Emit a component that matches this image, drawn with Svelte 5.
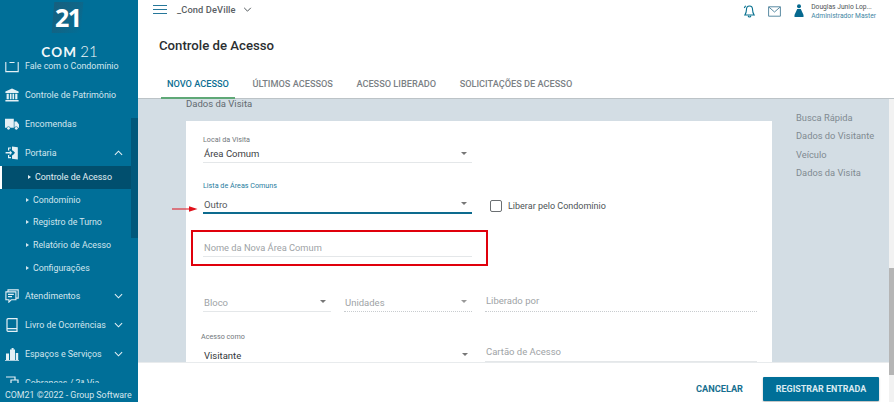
<script>
  // Controle de Acesso: novo acesso, área comum "Outro"
  const sideTop = [
    { label: 'Fale com o Condomínio', icon: 'mail' },
    { label: 'Controle de Patrimônio', icon: 'bank' },
    { label: 'Encomendas', icon: 'truck' },
  ];
  const portaria = ['Controle de Acesso', 'Condomínio', 'Registro de Turno', 'Relatório de Acesso', 'Configurações'];
  const sideBottom = [
    { label: 'Atendimentos', icon: 'chat' },
    { label: 'Livro de Ocorrências', icon: 'book' },
    { label: 'Espaços e Serviços', icon: 'city' },
    { label: 'Cobranças / 2ª Via', icon: 'bill' },
  ];
  const tabs = ['NOVO ACESSO', 'ÚLTIMOS ACESSOS', 'ACESSO LIBERADO', 'SOLICITAÇÕES DE ACESSO'];
  const anchors = ['Busca Rápida', 'Dados do Visitante', 'Veículo', 'Dados da Visita'];
</script>

{#snippet sideIcon(name)}
  <svg class="sicon" viewBox="0 0 14 14" aria-hidden="true">
    {#if name === 'mail'}
      <path d="M.8 1h12.4v11.6H.8zM5 1v2.5h4V1" fill="none" stroke="currentColor" stroke-width="1.1" />
    {:else if name === 'bank'}
      <path d="M7 .4 13.6 3.6v1.4H.4V3.6zM1.6 5.8h2.2v5.4H1.6zM4.9 5.8h1.6v5.4H4.9zM7.5 5.8h1.6v5.4H7.5zM10.2 5.8h2.2v5.4h-2.2zM.4 12h13.2v1.6H.4z" fill="currentColor" />
    {:else if name === 'truck'}
      <path d="M0 1.8h8.8v9H5.4a2 2 0 0 0-3.8 0H0zM9.4 4.4h2.4L14 7.4v3.4h-.9a2 2 0 0 0-3.7 0z" fill="currentColor" />
      <circle cx="3.5" cy="11.3" r="1.4" fill="currentColor" /><circle cx="11.3" cy="11.3" r="1.4" fill="currentColor" />
    {:else if name === 'door'}
      <path d="M7 .4 12.8 1.2V13.6L7 12.7V9.2h.8l2.2-2.4-2.2-2.4H7zM3 1.4h3v1.2H4.2v2H3zM3 9h1.2v2H6v1.2H3zM.6 6.1h4.2V4.4l2.3 2.4-2.3 2.4V7.5H.6z" fill="currentColor" />
    {:else if name === 'chat'}
      <path d="M3 2.8V.9h10.2v8.2h-2.1M.9 2.9h10v7.9H6.2l-2.3 2.3v-2.3h-3zM3 5.4h5.8M3 7.6h4" fill="none" stroke="currentColor" stroke-width="1.1" />
    {:else if name === 'book'}
      <path d="M3 .7h9v12.6H3a1 1 0 0 1-1-1V1.7a1 1 0 0 1 1-1zM2 10.6h10" fill="none" stroke="currentColor" stroke-width="1.2" />
    {:else if name === 'city'}
      <path d="M1 13V6.5h3V13zM5 13V2.5h1.6V1h2v1.5H10V13zM10.8 13V6h2.4v7zM0 13h14v.8H0z" fill="currentColor" />
    {:else}
      <path d="M1 1h9v3M6 4h7v9H6z" fill="none" stroke="currentColor" stroke-width="1.2" />
    {/if}
  </svg>
{/snippet}

{#snippet chevron(up)}
  <svg class="chev" viewBox="0 0 10 6" aria-hidden="true">
    <path d={up ? 'M1 5l4-4 4 4' : 'M1 1l4 4 4-4'} fill="none" stroke="currentColor" stroke-width="1.2" />
  </svg>
{/snippet}

<div class="page">
  <aside class="side">
    <div class="brand">
      <div class="mark"><span>21</span></div>
      <div class="wordmark">COM<span>21</span></div>
    </div>
    <nav class="nav">
      <div class="navscroll">
        {#each sideTop as it}
          <div class="item">{@render sideIcon(it.icon)}<span>{it.label}</span></div>
        {/each}
        <div class="item open">{@render sideIcon('door')}<span>Portaria</span>{@render chevron(true)}</div>
        {#each portaria as sub, i}
          <div class="sub" class:active={i === 0}><i></i>{sub}</div>
        {/each}
        {#each sideBottom as it, i}
          <div class="item" class:after={i === 0}>{@render sideIcon(it.icon)}<span>{it.label}</span>{#if i < 3}{@render chevron(false)}{/if}</div>
        {/each}
      </div>
      <div class="sidebar-thumb"></div>
    </nav>
    <div class="copy">COM21 ©2022 - Group Software</div>
  </aside>

  <main class="main">
    <header class="top">
      <div class="burger"><b></b><b></b><b></b></div>
      <span class="cond">_Cond DeVille</span>
      <svg class="cond-chev" viewBox="0 0 10 6" aria-hidden="true"><path d="M1 1l4 4 4-4" fill="none" stroke="currentColor" stroke-width="1.1" /></svg>
      <div class="top-right">
        <svg class="bell" viewBox="0 0 14 15" aria-hidden="true">
          <path d="M7 1.6c-2.3 0-3.3 1.8-3.3 4 0 2.6-.7 4-1.7 5.6h10c-1-1.6-1.7-3-1.7-5.6 0-2.2-1-4-3.3-4zM5.6 12.2c.2 1.6 2.6 1.6 2.8 0M1.4 3.8 2.8 1.4" fill="none" stroke="#06708f" stroke-width="1.2" />
        </svg>
        <svg class="env" viewBox="0 0 13 11" aria-hidden="true">
          <path d="M.6.8h11.8v9.4H.6zM.8 1l5.7 5 5.7-5" fill="none" stroke="#5b8ba3" stroke-width="1" />
        </svg>
        <svg class="user" viewBox="0 0 10 14" aria-hidden="true">
          <circle cx="5" cy="2.3" r="2" fill="#06698f" /><path d="M3.2 5h3.6l2.7 6v2H.5v-2z" fill="#06698f" />
        </svg>
        <div class="who">
          <div class="who-name">Douglas Junio Lop...</div>
          <div class="who-role">Administrador Master</div>
        </div>
      </div>
    </header>

    <h1 class="title">Controle de Acesso</h1>

    <div class="tabs">
      {#each tabs as t, i}
        <div class="tab" class:on={i === 0}>{t}</div>
      {/each}
    </div>

    <div class="content">
      <div class="section-name">Dados da Visita</div>
      <div class="card">
        <div class="row first">
          <div class="field w269">
            <div class="cap">Local da Visita</div>
            <div class="val">Área Comum<em></em></div>
          </div>
        </div>

        <div class="row second">
          <div class="field w269 focus">
            <div class="cap blue">Lista de Áreas Comuns</div>
            <div class="val">Outro<em></em></div>
          </div>
          <label class="check"><span class="box"></span>Liberar pelo Condomínio</label>
        </div>

        <div class="highlight">
          <div class="field w269">
            <div class="val ph">Nome da Nova Área Comum</div>
          </div>
        </div>

        <div class="row fourth">
          <div class="field w128">
            <div class="val ph">Bloco<em></em></div>
          </div>
          <div class="field w128 off">
            <div class="val ph">Unidades<em></em></div>
          </div>
          <div class="field w272 off released">
            <div class="val ph">Liberado por</div>
          </div>
        </div>

        <div class="row fifth">
          <div class="field w269 visit">
            <div class="cap">Acesso como</div>
            <div class="val dark">Visitante<em></em></div>
          </div>
          <div class="field w272 card-no">
            <div class="val ph">Cartão de Acesso</div>
          </div>
        </div>
      </div>
      <div class="anchors">
        {#each anchors as a}
          <div>{a}</div>
        {/each}
      </div>
      <svg class="pointer" viewBox="0 0 26 6" aria-hidden="true">
        <path d="M0 2.4h17V.2L25.5 3 17 5.8V3.6H0z" fill="#e0101a" />
      </svg>
    </div>

    <footer class="foot">
      <button class="cancel">CANCELAR</button>
      <button class="save">REGISTRAR ENTRADA</button>
    </footer>

    <div class="track"><div class="thumb"></div></div>
  </main>
</div>

<style>
  :global(body) { margin: 0; background: #fff; }
  .page { display: flex; width: 894px; height: 402px; overflow: hidden; font-family: Roboto, "Liberation Sans", sans-serif; }

  /* sidebar */
  .side { width: 138px; flex: none; background: #006f98; color: #d3e6ee; display: flex; flex-direction: column; }
  .brand { height: 62px; flex: none; position: relative; z-index: 1; background: #006f98; display: flex; flex-direction: column; align-items: center; }
  .mark { width: 29px; height: 31px; margin: 2px 0 0 -3px; background: linear-gradient(120deg, #175f7e, #0f6688 55%, #006f98); transform: skewX(-5deg); display: flex; align-items: center; justify-content: center; }
  .mark span { transform: skewX(5deg); font: 700 25px/1 "Open Sans", Roboto, sans-serif; letter-spacing: -1.5px; color: #fff; }
  .wordmark { margin-top: 10px; margin-left: 1px; font: 700 13.5px/16px Lato, Roboto, sans-serif; letter-spacing: 1.2px; color: #f2f8fa; }
  .wordmark span { font-weight: 300; font-size: 15px; margin-left: 3px; letter-spacing: 0; }
  .nav { flex: 1; overflow: hidden; position: relative; min-height: 0; }
  .navscroll { margin-top: -10.5px; }
  .item { height: 29px; display: flex; align-items: center; padding: 0 15px 0 5px; font-size: 8.9px; box-sizing: border-box; }
  .item span { flex: 1; margin-left: 6px; white-space: nowrap; }
  .item.open { height: 27.5px; padding-top: 1px; }
  .item.after { margin-top: 2.5px; }
  .sicon { width: 14px; height: 14px; flex: none; color: #e4f0f5; }
  .chev { width: 9px; height: 6px; flex: none; color: #e4f0f5; }
  .sub { height: 22.6px; display: flex; align-items: center; padding-left: 26px; font-size: 8.8px; white-space: nowrap; }
  .sub i { width: 0; height: 0; border-left: 3px solid currentColor; border-top: 2.5px solid transparent; border-bottom: 2.5px solid transparent; margin-right: 4px; }
  .sub.active { background: #014f6e; border-left: 2px solid #fff; padding-left: 26px; font-size: 8.9px; color: #e3eff4; margin-right: 7px; }
  .sidebar-thumb { position: absolute; right: 0; top: 56px; width: 7px; height: 120px; background: #01587b; }
  .copy { height: 19px; flex: none; box-sizing: border-box; font-size: 8.85px; line-height: 17px; padding: 4px 0 0 5px; white-space: nowrap; color: #d5e6ed; }

  /* main */
  .main { flex: 1; min-width: 0; display: flex; flex-direction: column; position: relative; }
  .top { height: 19px; flex: none; display: flex; align-items: center; padding-left: 15px; }
  .burger { width: 14px; display: flex; flex-direction: column; gap: 2.5px; }
  .burger b { height: 1.5px; background: #26779a; display: block; }
  .cond { margin-left: 10px; font-size: 9.3px; font-weight: 500; color: #5a6064; letter-spacing: .1px; }
  .cond-chev { width: 9px; height: 5px; margin-left: 7px; color: #3f474b; }
  .top-right { margin-left: auto; display: flex; align-items: center; padding: 3px 18px 0 0; }
  .bell { width: 13px; height: 15px; }
  .env { width: 13px; height: 11px; margin-left: 12px; }
  .user { width: 10px; height: 14px; margin-left: 13px; }
  .who { margin: 1px 0 0 7px; font-size: 6.7px; line-height: 9px; }
  .who-name { color: #4e5356; }
  .who-role { color: #3f86a4; }
  .title { margin: 18px 0 0 21px; height: 18px; font-size: 13.2px; line-height: 18px; font-weight: 500; color: #2b2f32; flex: none; }
  .tabs { height: 44px; flex: none; display: flex; box-sizing: border-box; border-bottom: 1.5px solid #bcc3c7; padding-left: 23px; }
  .tab { margin: 23px 11.5px 0 0; height: 19.5px; padding: 0 6px; font-size: 9.2px; font-weight: 500; color: #7b8185; white-space: nowrap; box-sizing: border-box; line-height: 11px; }
  .tab.on { color: #0d6f93; border-bottom: 2px solid #5fa877; height: 21px; }

  .content { flex: 1; min-height: 0; background: #d3dde4; position: relative; overflow: hidden; padding: 0 5px 0 48px; }
  .section-name { height: 22px; font-size: 9.5px; line-height: 9px; color: #626a70; }
  .card { width: 586px; height: 400px; background: #fff; box-sizing: border-box; padding: 14px 15px 0 17px; }
  .row { display: flex; }
  .first { height: 30px; }
  .second { margin-top: 16px; height: 33px; align-items: flex-end; }
  .fourth { margin-top: 26px; gap: 13px; }
  .fifth { margin-top: 20px; gap: 13px; align-items: flex-start; }
  .field { flex: none; }
  .w269 { width: 269px; }
  .w128 { width: 128px; }
  .w272 { width: 272px; }
  .cap { font-size: 7.2px; line-height: 9px; color: #71777b; }
  .cap.blue { color: #1f7c9e; margin-bottom: 4px; }
  .val { position: relative; height: 20px; box-sizing: border-box; padding: 5px 1px 0; border-bottom: 1px solid #e4e7e9; font-size: 9.5px; line-height: 12px; color: #55595c; white-space: nowrap; }
  .first .val { height: 19px; padding-top: 4px; color: #3d4144; }
  .val em { position: absolute; right: 5px; top: 8px; width: 0; height: 0; border-left: 3.5px solid transparent; border-right: 3.5px solid transparent; border-top: 3.5px solid #777; }
  .val.ph { color: #9ea3a6; }
  .highlight .val { font-size: 9.3px; }
  .val.dark { color: #33373a; border-bottom: none; }
  .focus .val { border-bottom: 2px solid #0d6b8e; }
  .off .val { border-bottom: 1px dotted #c8cccf; }
  .off .val em { border-top-color: #999; }
  .released .val { padding-top: 3px; }
  .visit { margin-left: -2px; }
  .visit .cap { margin-bottom: 4px; }
  .visit .val { padding-left: 3px; }
  .visit .val em { right: 4px; }
  .visit.w269 { width: 271px; }
  .card-no { margin-top: 10px; }
  .card-no .val { padding-top: 4px; }
  .check { margin: 0 0 1px 18px; display: flex; align-items: center; font-size: 9px; color: #4e5356; height: 14px; white-space: nowrap; }
  .box { width: 12px; height: 12px; box-sizing: border-box; border: 1.2px solid #6b6f72; border-radius: 2px; margin-right: 6px; }
  .highlight { margin: 16px 0 0 -12px; width: 297px; height: 36px; box-sizing: border-box; border: 2px solid #e0000c; padding: 5px 0 0 10px; }
  .anchors { position: absolute; left: 658px; top: 10px; width: 88px; font-size: 9.3px; color: #808a91; line-height: 18.4px; white-space: nowrap; }
  .pointer { position: absolute; left: 34px; top: 107px; width: 26px; height: 6px; }
  .track { position: absolute; right: 0; top: 99px; bottom: 0; width: 5px; background: #f2f2f2; }
  .thumb { margin-top: 169px; height: 107px; background: #b5b5b5; }
  .foot { height: 40px; flex: none; display: flex; align-items: flex-end; justify-content: flex-end; padding: 0 15px 1.5px 0; border-top: 1px solid #e8ebed; box-sizing: border-box; background: #fff; }
  .foot button { font-family: inherit; font-size: 9.2px; font-weight: 700; border: 0; height: 24px; padding: 0; }
  .cancel { background: none; color: #176f90; margin-right: 20px; }
  .foot .save { width: 116px; font-size: 8.95px; background: #006f98; color: #d9eaf1; border-radius: 1px; box-shadow: 0 1px 2px rgba(0,0,0,.3); }
</style>
